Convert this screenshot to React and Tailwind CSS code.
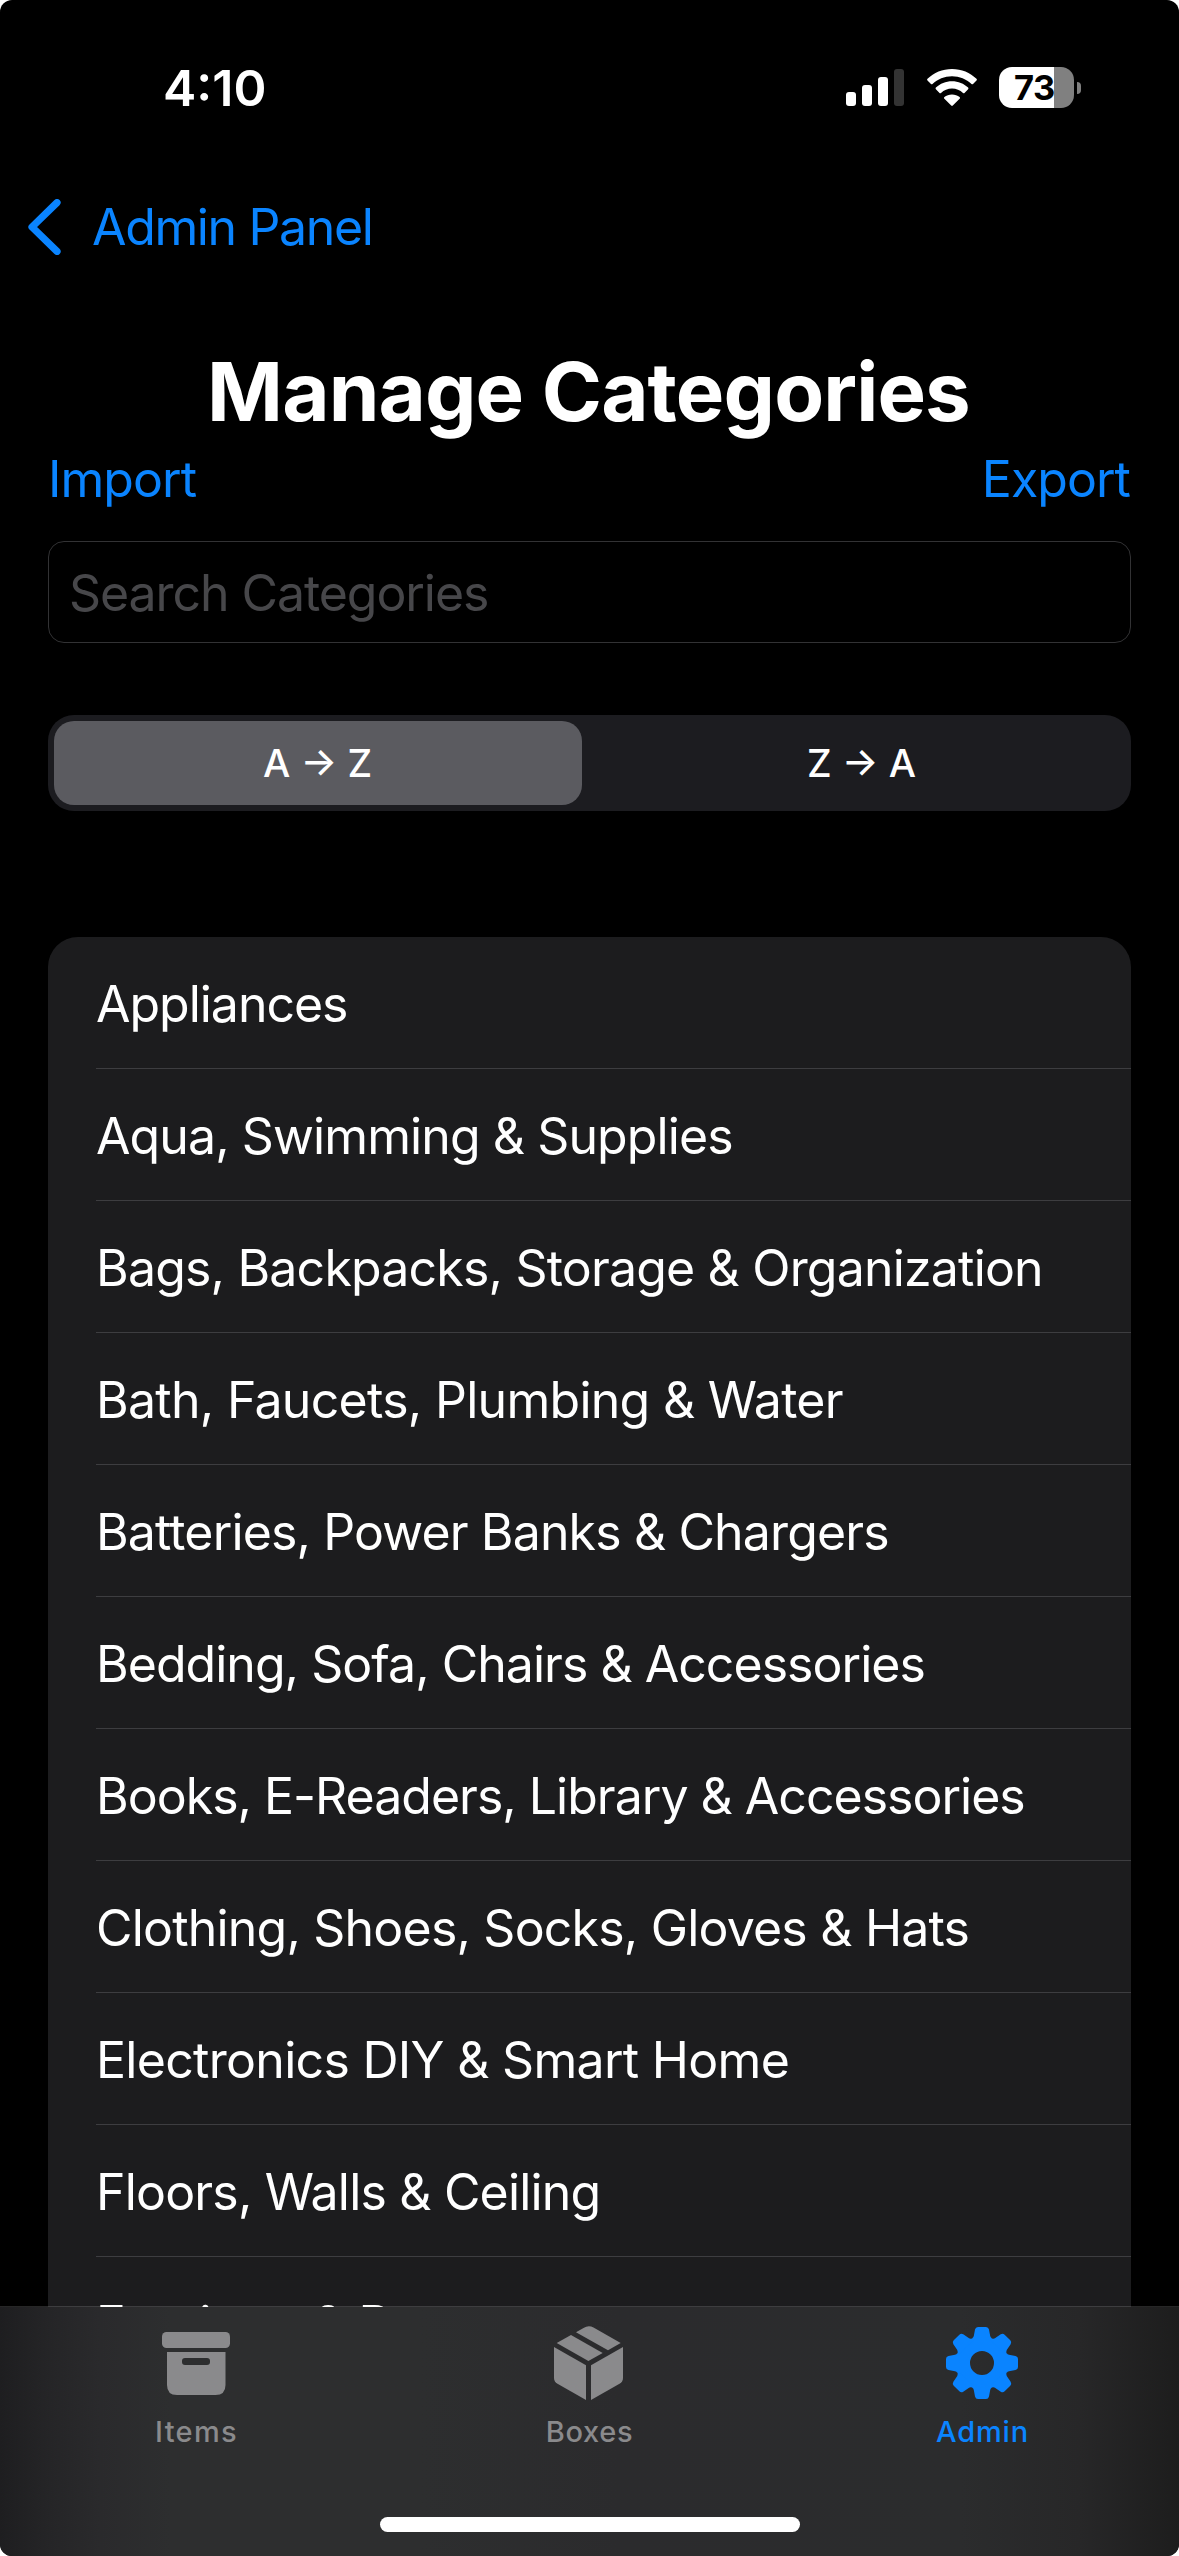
import React from "react";

const categories = [
  { name: "Appliances", tracking: "tracking-[-1.02px]" },
  { name: "Aqua, Swimming & Supplies", tracking: "tracking-[-0.9px]" },
  { name: "Bags, Backpacks, Storage & Organization", tracking: "tracking-[-0.81px]" },
  { name: "Bath, Faucets, Plumbing & Water", tracking: "tracking-[-0.71px]" },
  { name: "Batteries, Power Banks & Chargers", tracking: "tracking-[-0.86px]" },
  { name: "Bedding, Sofa, Chairs & Accessories", tracking: "tracking-[-0.97px]" },
  { name: "Books, E-Readers, Library & Accessories", tracking: "tracking-[-0.99px]" },
  { name: "Clothing, Shoes, Socks, Gloves & Hats", tracking: "tracking-[-0.8px]" },
  { name: "Electronics DIY & Smart Home", tracking: "tracking-[-0.7px]" },
  { name: "Floors, Walls & Ceiling", tracking: "tracking-[-0.82px]" },
  { name: "Furniture & Decor", tracking: "tracking-[-0.8px]" },
];

function SignalIcon() {
  return (
    <svg width="58" height="37" viewBox="0 0 58 37" fill="#fff">
      <rect x="0" y="23" width="10" height="14" rx="3" />
      <rect x="16" y="16" width="10" height="21" rx="3" />
      <rect x="32" y="8" width="10" height="29" rx="3" />
      <rect x="48" y="0" width="10" height="37" rx="3" fill="#333" />
    </svg>
  );
}

function WifiIcon() {
  return (
    <svg width="50" height="37" viewBox="0 0 50 37" fill="#fff">
      <path d="M25 0C34.500 0 43.200 3.700 49.500 9.800Q50.300 10.600 49.500 11.400L46 15Q45.300 15.700 44.500 15C39.400 10.200 32.500 7.300 25 7.300S10.600 10.200 5.500 15Q4.700 15.700 4 15L.5 11.400Q-.3 10.600 .5 9.800C6.800 3.700 15.500 0 25 0Z" />
      <path d="M25 12.300C31.200 12.300 36.900 14.700 41.100 18.600Q41.900 19.400 41.100 20.200L37.500 23.900Q36.800 24.600 36 23.900C33.100 21.200 29.200 19.600 25 19.600S16.900 21.200 14 23.900Q13.200 24.600 12.500 23.900L8.900 20.200Q8.100 19.400 8.900 18.600C13.100 14.700 18.800 12.300 25 12.300Z" />
      <path d="M25 25.500C27.900 25.500 30.600 26.500 32.600 28.100Q33.400 28.900 32.600 29.700L25.800 36.500Q25 37.300 24.200 36.500L17.400 29.700Q16.600 28.900 17.400 28.100C19.400 26.500 22.100 25.500 25 25.500Z" />
    </svg>
  );
}

function Battery() {
  return (
    <div className="flex items-center gap-[3px]">
      <div className="flex h-[41px] w-[75px] items-center overflow-hidden rounded-[13px] bg-[linear-gradient(90deg,#fff_55px,#808080_55px)]">
        <span className="pl-[15px] pt-px text-[34.5px] font-bold leading-none tracking-[-0.6px] text-black">73</span>
      </div>
      <div className="h-[12px] w-[4px] rounded-r-full bg-[#808080]" />
    </div>
  );
}

function ItemsIcon() {
  return (
    <svg width="68" height="63" viewBox="0 0 68 63" fill="currentColor">
      <rect x="0" y="0" width="68" height="16" rx="4.500" />
      <path fillRule="evenodd" d="M5 20H63.500V53Q63.500 63 53.500 63H15Q5 63 5 53ZM23 26Q20 26 20 29V30Q20 33 23 33H45Q48 33 48 30V29Q48 26 45 26Z" />
    </svg>
  );
}

function BoxIcon() {
  return (
    <svg width="69" height="74" viewBox="0 0 69 74" fill="currentColor">
      <path d="M22 6.300L29.500 2Q34.500 -1.200 39.500 1.500L66.700 17L54 24.200Z" />
      <path d="M2.700 17L17 8.900L48.700 27L34.400 35Z" />
      <path d="M0 21L32 39.300V74L3.500 57.800Q0 55.800 0 52Z" />
      <path d="M69 21L37 39.300V74L65.500 57.800Q69 55.800 69 52Z" />
    </svg>
  );
}

function GearIcon() {
  const angles = [0, 45, 90, 135, 180, 225, 270, 315];
  return (
    <svg width="72" height="72" viewBox="-36 -36 72 72" fill="currentColor">
      <circle r="18.700" fill="none" stroke="currentColor" strokeWidth="13.400" />
      {angles.map((a) => (
        <path
          key={a}
          transform={`rotate(${a})`}
          d="M-10.500 -22L-9.800 -24.800Q-8.600 -25.400 -8.200 -27L-7 -33.500Q-6.400 -36 -4 -36H4Q6.400 -36 7 -33.500L8.200 -27Q8.600 -25.400 9.800 -24.800L10.500 -22Z"
        />
      ))}
    </svg>
  );
}

function Tab({ icon, label, className }) {
  return (
    <div className={`flex flex-1 flex-col items-center ${className}`}>
      <div className="flex h-[112px] items-center justify-center pr-[1.5px]">{icon}</div>
      <span className="text-[29px] font-medium leading-[26px]">{label}</span>
    </div>
  );
}

export default function App() {
  return (
    <div className="bg-white">
      <div className="flex h-[2556px] w-[1179px] flex-col overflow-hidden rounded-[12px] bg-black font-['Inter',sans-serif] text-[50px] text-white">
        <main className="h-[2307px] shrink-0 overflow-hidden">
          <div className="flex h-[175px] items-center justify-between pl-[163px] pr-[98px]">
            <span className="pt-px font-semibold leading-none">4:10</span>
            <div className="flex items-center">
              <SignalIcon />
              <div className="ml-[23px] mr-[22px]">
                <WifiIcon />
              </div>
              <Battery />
            </div>
          </div>

          <nav className="mt-px flex h-[102px] items-center pl-[28px] text-[#0a84ff]">
            <svg width="33" height="56" viewBox="0 0 33 56" fill="none" stroke="currentColor" strokeWidth="7.2" strokeLinecap="round" strokeLinejoin="round">
              <path d="M29 3.600L4 28L29 52.400" />
            </svg>
            <span className="ml-[31px] leading-none tracking-[-1.35px]">Admin Panel</span>
          </nav>

          <h1 className="mt-[65px] pr-[2px] text-center text-[81.5px] font-bold leading-[98px] tracking-[-0.86px]">Manage Categories</h1>

          <div className="-mt-px flex h-[78px] items-center justify-between pl-12 pr-[49px] text-[#0a84ff]">
            <span className="tracking-[-0.95px]">Import</span>
            <span className="tracking-[-0.95px]">Export</span>
          </div>

          <div className="mx-12 mt-[23px] flex h-[102px] items-center rounded-[16px] border border-[#323234] pl-[20px] pt-[2px] tracking-[-1.07px] text-[#47474a]">
            Search Categories
          </div>

          <div className="mx-12 mt-[72px] flex h-24 rounded-[26px] bg-[#1c1c20] text-[38.5px] font-medium">
            <div className="m-1.5 flex w-[528px] items-center justify-center rounded-[20px] bg-[#5b5b60] pr-px pt-[2px]">A → Z</div>
            <div className="flex flex-1 items-center justify-center pl-[4px] pt-[2px]">Z → A</div>
          </div>

          <ul className="mx-12 mt-[126px] rounded-t-[30px] bg-[#1c1c1e] pl-12">
            {categories.map((c) => (
              <li key={c.name} className="flex h-[132px] items-center border-b border-[#3d3d40] pt-[3px]">
                <span className={`whitespace-nowrap ${c.tracking}`}>{c.name}</span>
              </li>
            ))}
          </ul>
        </main>

        <footer className="relative -mt-px flex h-[250px] shrink-0 flex-col border-t border-white/15 bg-[linear-gradient(90deg,#1e1e20_0px,#252527_50px,#2a2a2c_100px,#2d2e2f_170px,#2d2e2f_420px,#2b2b2d_620px,#2b2c2d_960px,#272728_1080px,#1d1d1d_1179px)] bg-clip-padding">
          <div className="flex">
            <Tab icon={<ItemsIcon />} label={<span className="tracking-[1.3px]">Items</span>} className="text-[#8a8a8c]" />
            <Tab icon={<BoxIcon />} label={<span className="tracking-[0.7px]">Boxes</span>} className="text-[#8a8a8c]" />
            <Tab icon={<GearIcon />} label={<span className="tracking-[0.8px]">Admin</span>} className="text-[#0a84ff]" />
          </div>
          <div className="mx-auto mb-6 mt-auto h-[15px] w-[420px] rounded-full bg-white" />
        </footer>
      </div>
    </div>
  );
}
